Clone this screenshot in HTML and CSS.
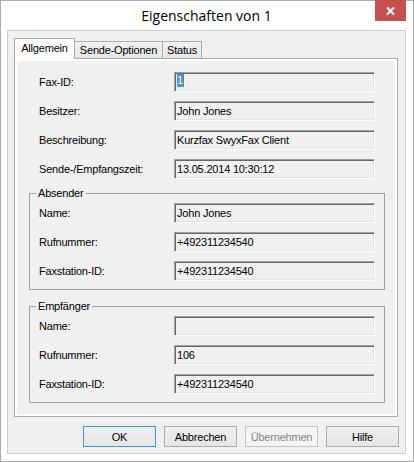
FILE: index.html
```html
<!doctype html>
<html lang="de">
  <head>
    <meta charset="UTF-8" />
    <title>Eigenschaften von 1</title>
    <link rel="stylesheet" href="styles.css">
  </head>
  <body>
    <div class="window">
      <div class="title-bar">
        <span class="title">Eigenschaften von 1</span>
        <button type="button" class="close-btn" aria-label="Schließen">
          <svg width="9" height="8" viewBox="0 0 9 8">
            <path d="M1 0.5 L8 7.5 M8 0.5 L1 7.5" stroke="#fff" stroke-width="2" />
          </svg>
        </button>
      </div>

      <div class="client">
        <!-- Property sheet tabs -->
        <div class="tabs">
          <div class="tab active tab-general">Allgemein</div>
          <div class="tab tab-send">Sende-Optionen</div>
          <div class="tab tab-status">Status</div>
        </div>

        <div class="tab-page">
          <div class="field-grid top-fields">
            <label>Fax-ID:</label>
            <div class="field"><span class="sel">1</span><span class="caret"></span></div>
            <label>Besitzer:</label>
            <div class="field">John Jones</div>
            <label>Beschreibung:</label>
            <div class="field">Kurzfax SwyxFax Client</div>
            <label>Sende-/Empfangszeit:</label>
            <div class="field">13.05.2014 10:30:12</div>
          </div>

          <fieldset class="group">
            <legend>Absender</legend>
            <div class="field-grid">
              <label>Name:</label>
              <div class="field">John Jones</div>
              <label>Rufnummer:</label>
              <div class="field">+492311234540</div>
              <label>Faxstation-ID:</label>
              <div class="field">+492311234540</div>
            </div>
          </fieldset>

          <fieldset class="group group-second">
            <legend>Empfänger</legend>
            <div class="field-grid">
              <label>Name:</label>
              <div class="field"></div>
              <label>Rufnummer:</label>
              <div class="field">106</div>
              <label>Faxstation-ID:</label>
              <div class="field">+492311234540</div>
            </div>
          </fieldset>
        </div>

        <div class="buttons">
          <button type="button" class="btn default">OK</button>
          <button type="button" class="btn">Abbrechen</button>
          <button type="button" class="btn" disabled>Übernehmen</button>
          <button type="button" class="btn">Hilfe</button>
        </div>
      </div>
    </div>
  </body>
</html>
```

FILE: styles.css
```css
body {
  margin: 0;
  font-family: "Liberation Sans", Arial, sans-serif;
  font-size: 11px;
  letter-spacing: -0.2px;
  color: #000;
  background: #fff;
}

.window {
  width: 414px;
  height: 462px;
  box-sizing: border-box;
  border: 1px solid #ababab;
  background: #fff;
  padding: 0 7px 7px 6px;
  display: flex;
  flex-direction: column;
}

/* Title bar */
.title-bar {
  height: 29px;
  flex-shrink: 0;
  display: grid;
  grid-template-columns: 1fr auto 1fr;
}

.title {
  grid-column: 2;
  align-self: center;
  font-family: "Open Sans", "Noto Sans", sans-serif;
  font-size: 14px;
  letter-spacing: 0;
  line-height: 20px;
  color: #000;
}

.close-btn {
  grid-column: 3;
  justify-self: end;
  align-self: start;
  margin-top: -1px;
  width: 31px;
  height: 21px;
  border: none;
  padding: 0;
  background: #c75050;
  display: flex;
  align-items: center;
  justify-content: center;
}

/* Dialog client area */
.client {
  flex: 1;
  border: 1px solid #cfcfcf;
  background: #f0f0f0;
  padding: 7px 7px 6px 6px;
  display: flex;
  flex-direction: column;
}

.tabs {
  display: flex;
  align-items: flex-end;
  height: 20px;
  flex-shrink: 0;
  position: relative;
  z-index: 1;
}

.tab {
  box-sizing: border-box;
  height: 17px;
  margin-left: -1px;
  border: 1px solid #acacac;
  border-bottom: none;
  background: linear-gradient(#f2f2f2, #e6e6e6);
  text-align: center;
  line-height: 16px;
}

.tab.active {
  height: 21px;
  margin-left: 0;
  margin-bottom: -1px;
  background: #fff;
  line-height: 19px;
}

.tab-general {
  width: 61px;
}

.tab-send {
  width: 89px;
}

.tab-status {
  width: 40px;
}

.tab-page {
  flex: 1;
  border: 1px solid #acacac;
  background: #f0f0f0;
  box-shadow: inset 0 0 0 2px #fff;
  padding: 13px 12px 13px 14px;
  display: flex;
  flex-direction: column;
}

.top-fields {
  margin: 0 10px;
}

.field-grid {
  display: grid;
  grid-template-columns: 135px 201px;
  grid-auto-rows: 20px;
  row-gap: 9px;
  align-items: center;
}

.field {
  box-sizing: border-box;
  height: 20px;
  border: 1px solid;
  border-color: #a0a0a0 #fff #fff #a0a0a0;
  box-shadow: inset 1px 1px 0 #696969, inset -1px -1px 0 #e3e3e3;
  padding-left: 2px;
  line-height: 18px;
  white-space: nowrap;
  overflow: hidden;
}

.sel {
  display: inline-block;
  vertical-align: top;
  margin-top: 1px;
  line-height: 13px;
  background: #3399ff;
  color: #fff;
}

.caret {
  display: inline-block;
  vertical-align: top;
  margin-top: 1px;
  width: 1px;
  height: 13px;
  background: #c86a1e;
}

/* Group boxes */
.group {
  margin: 8px 0 0;
  min-width: 0;
  border: 1px solid #a0a0a0;
  padding: 3px 9px 8px;
}

.group-second {
  margin-top: 10px;
}

.group legend {
  margin-left: -3px;
  padding: 0 2px;
  line-height: 13px;
}

/* Dialog buttons */
.buttons {
  display: flex;
  justify-content: flex-end;
  gap: 8px;
  margin: 9px -1px 0 0;
}

.btn {
  width: 73px;
  height: 21px;
  box-sizing: border-box;
  border: 1px solid #acacac;
  background: linear-gradient(#f0f0f0, #e5e5e5);
  font-family: inherit;
  font-size: 11px;
  letter-spacing: -0.2px;
  color: #000;
  padding: 0;
}

.btn.default {
  border-color: #3399ff;
}

.btn:disabled {
  border-color: #c4c4c4;
  background: #f4f4f4;
  color: #838383;
}
```
